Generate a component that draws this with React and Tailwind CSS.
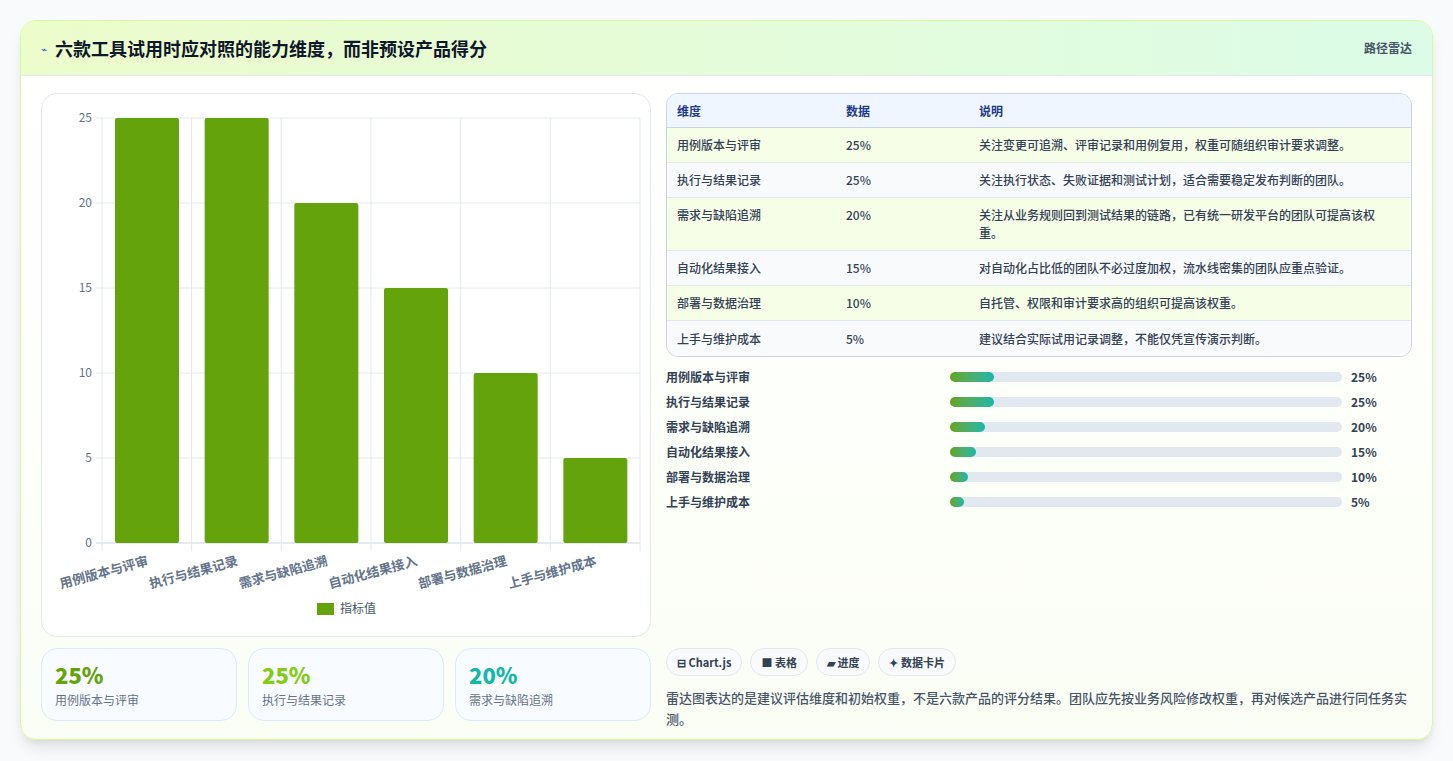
import React from "react";

const dims = [
  ["用例版本与评审", 25, "关注变更可追溯、评审记录和用例复用，权重可随组织审计要求调整。", 44],
  ["执行与结果记录", 25, "关注执行状态、失败证据和测试计划，适合需要稳定发布判断的团队。", 44],
  ["需求与缺陷追溯", 20, "关注从业务规则回到测试结果的链路，已有统一研发平台的团队可提高该权重。", 35],
  ["自动化结果接入", 15, "对自动化占比低的团队不必过度加权，流水线密集的团队应重点验证。", 26],
  ["部署与数据治理", 10, "自托管、权限和审计要求高的组织可提高该权重。", 18],
  ["上手与维护成本", 5, "建议结合实际试用记录调整，不能仅凭宣传演示判断。", 14],
];

function Chart() {
  const L = 60, R = 598, T = 24, B = 449;
  const cw = (R - L) / 6;
  const y = (v) => B - (v / 25) * (B - T);
  return (
    <svg width="610" height="544" viewBox="0 0 610 544" className="block">
      {[0, 5, 10, 15, 20, 25].map((v) => (
        <g key={v}>
          <line x1={L - 6} x2={R} y1={y(v)} y2={y(v)} stroke={v === 0 ? "#cbd5e1" : "#e2e8f0"} />
          <text x={L - 10} y={y(v) + 4} textAnchor="end" fontSize="12" fill="#64748b">{v}</text>
        </g>
      ))}
      {[0, 1, 2, 3, 4, 5, 6].map((i) => (
        <line key={i} x1={L + i * cw} x2={L + i * cw} y1={T} y2={B + 8} stroke="#e2e8f0" />
      ))}
      {dims.map((d, i) => (
        <g key={d[0]}>
          <rect x={L + i * cw + 13} y={y(d[1])} width={64} height={B - y(d[1])} fill="#65a30d" rx="2" />
          <text x={L + i * cw + 47} y={B + 22} textAnchor="end" fontSize="13" fontWeight="600" fill="#64748b"
            transform={`rotate(-15 ${L + i * cw + 47} ${B + 22})`}>{d[0]}</text>
        </g>
      ))}
      <rect x="275" y="509" width="17" height="12" fill="#65a30d" />
      <text x="298" y="519" fontSize="12" fill="#475569">指标值</text>
    </svg>
  );
}

export default function App() {
  return (
    <div className="w-[1453px] h-[761px] bg-[#f8fafc] pt-5 px-5" style={{ fontFamily: '"Noto Sans CJK SC","Noto Sans",sans-serif' }}>
      <div className="w-[1413px] h-[720px] rounded-2xl border border-[#d9f99d] bg-gradient-to-b from-white to-[#fbfef5] shadow-lg overflow-hidden">
        <div className="h-[55px] flex items-center justify-between px-5 bg-gradient-to-r from-[#ecfccb] to-[#dcfce7] border-b border-[#e2e8f0]">
          <div className="flex items-center gap-2">
            <span className="text-[10px] text-[#2563eb]">⌁</span>
            <span className="text-[18px] font-bold text-[#0f172a]">六款工具试用时应对照的能力维度，而非预设产品得分</span>
          </div>
          <span className="text-[12px] font-semibold text-[#475569]">路径雷达</span>
        </div>
        <div className="flex gap-[15px] px-5 pt-[17px]">
          <div className="w-[610px] flex flex-col gap-[11px]">
            <div className="h-[544px] rounded-2xl border border-[#e2e8f0] bg-white"><Chart /></div>
            <div className="grid grid-cols-3 gap-[11px]">
              {[["25%", "text-[#65a30d]", 0], ["25%", "text-[#84cc16]", 1], ["20%", "text-[#14b8a6]", 2]].map(([v, c, i]) => (
                <div key={i} className="h-[73px] rounded-2xl border border-[#dbeafe] bg-[#f8fbff] px-[13px] pt-[10px]">
                  <div className={`text-[22px] font-extrabold leading-[30px] ${c}`}>{v}</div>
                  <div className="text-[12px] text-[#64748b] mt-[2px]">{dims[i][0]}</div>
                </div>
              ))}
            </div>
          </div>
          <div className="w-[748px] flex flex-col">
            <div className="rounded-xl border border-[#cbd5e1] overflow-hidden text-[12px]">
              <div className="flex h-[34px] items-center bg-[#eff6ff] font-semibold text-[#1e3a8a] border-b border-[#cbd5e1]">
                <div className="w-[179px] pl-[10px]">维度</div><div className="w-[133px]">数据</div><div className="flex-1">说明</div>
              </div>
              {dims.map((d, i) => (
                <div key={d[0]} className={`flex ${i === 2 ? "py-[8px] h-[53px]" : "h-[35px] items-center"} ${i % 2 === 0 ? "bg-[#f7fee7]" : "bg-[#f8fafc]"} ${i < 5 ? "border-b border-[#e2e8f0]" : ""} text-[#334155] font-medium`}>
                  <div className="w-[179px] pl-[10px]">{d[0]}</div>
                  <div className="w-[133px]">{d[1]}%</div>
                  <div className="flex-1 pr-6 leading-[18px]">{d[2]}</div>
                </div>
              ))}
            </div>
            <div className="flex flex-col gap-[9px] mt-[12px]">
              {dims.map((d) => (
                <div key={d[0]} className="flex items-center h-[16px] text-[12px] font-semibold text-[#334155]">
                  <div className="w-[284px]">{d[0]}</div>
                  <div className="w-[392px] h-[10px] rounded-full bg-[#e2e8f0]">
                    <div className="h-[10px] rounded-full bg-gradient-to-r from-[#65a30d] to-[#14b8a6]" style={{ width: d[3] }} />
                  </div>
                  <div className="ml-[9px]">{d[1]}%</div>
                </div>
              ))}
            </div>
            <div className="flex gap-2 mt-[138px]">
              {["⊟ Chart.js", "■ 表格", "▰ 进度", "✦ 数据卡片"].map((t) => (
                <span key={t} className="h-[28px] px-[10px] flex items-center rounded-full border border-[#e2e8f0] bg-[#f8fafc] text-[11px] font-semibold text-[#334155]">{t}</span>
              ))}
            </div>
            <p className="mt-[11px] text-[13px] leading-[21px] text-[#475569] font-medium">雷达图表达的是建议评估维度和初始权重，不是六款产品的评分结果。团队应先按业务风险修改权重，再对候选产品进行同任务实测。</p>
          </div>
        </div>
      </div>
    </div>
  );
}
